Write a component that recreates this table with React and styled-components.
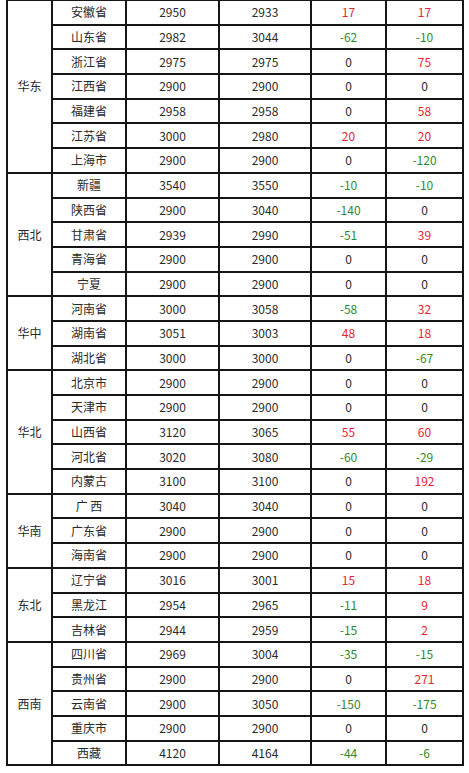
import styled, { createGlobalStyle } from 'styled-components'

const GlobalStyle = createGlobalStyle`
  html, body {
    margin: 0;
    padding: 0;
    background: #FFFFFF;
  }
  body {
    font-family: "Microsoft YaHei", "Noto Sans CJK SC", "Noto Sans", sans-serif;
  }
`

// 지역별 데이터
const regions = [
  {
    name: '华东',
    rows: [
      ['安徽省', 2950, 2933, 17, 17],
      ['山东省', 2982, 3044, -62, -10],
      ['浙江省', 2975, 2975, 0, 75],
      ['江西省', 2900, 2900, 0, 0],
      ['福建省', 2958, 2958, 0, 58],
      ['江苏省', 3000, 2980, 20, 20],
      ['上海市', 2900, 2900, 0, -120],
    ],
  },
  {
    name: '西北',
    rows: [
      ['新疆', 3540, 3550, -10, -10],
      ['陕西省', 2900, 3040, -140, 0],
      ['甘肃省', 2939, 2990, -51, 39],
      ['青海省', 2900, 2900, 0, 0],
      ['宁夏', 2900, 2900, 0, 0],
    ],
  },
  {
    name: '华中',
    rows: [
      ['河南省', 3000, 3058, -58, 32],
      ['湖南省', 3051, 3003, 48, 18],
      ['湖北省', 3000, 3000, 0, -67],
    ],
  },
  {
    name: '华北',
    rows: [
      ['北京市', 2900, 2900, 0, 0],
      ['天津市', 2900, 2900, 0, 0],
      ['山西省', 3120, 3065, 55, 60],
      ['河北省', 3020, 3080, -60, -29],
      ['内蒙古', 3100, 3100, 0, 192],
    ],
  },
  {
    name: '华南',
    rows: [
      ['广 西', 3040, 3040, 0, 0],
      ['广东省', 2900, 2900, 0, 0],
      ['海南省', 2900, 2900, 0, 0],
    ],
  },
  {
    name: '东北',
    rows: [
      ['辽宁省', 3016, 3001, 15, 18],
      ['黑龙江', 2954, 2965, -11, 9],
      ['吉林省', 2944, 2959, -15, 2],
    ],
  },
  {
    name: '西南',
    rows: [
      ['四川省', 2969, 3004, -35, -15],
      ['贵州省', 2900, 2900, 0, 271],
      ['云南省', 2900, 3050, -150, -175],
      ['重庆市', 2900, 2900, 0, 0],
      ['西藏', 4120, 4164, -44, -6],
    ],
  },
]

const columnWidths = [45, 74, 93, 92, 75, 77]

const Page = styled.div`
  padding: 0 0 0 6px;
`

const Table = styled.table`
  border-collapse: collapse;
  table-layout: fixed;
  width: 456px;
  margin-top: -1px;
  border: 2px solid #161616;
`

const Col = styled.col`
  width: ${(props) => props.$w}px;
`

const Row = styled.tr`
  height: 24.7px;
`

const Cell = styled.td`
  border: 2px solid #161616;
  padding: 0;
  text-align: center;
  vertical-align: middle;
  font-size: 12px;
  line-height: 14px;
  color: ${(props) =>
    props.$tone === 'up' ? '#e8242f' : props.$tone === 'down' ? '#2f8a2a' : '#2a2a2a'};
`

const toneOf = (v) => (v > 0 ? 'up' : v < 0 ? 'down' : 'flat')

export default function App() {
  return (
    <Page>
      <GlobalStyle />
      <Table>
        <colgroup>
          {columnWidths.map((w, i) => (
            <Col key={i} $w={w} />
          ))}
        </colgroup>
        <tbody>
          {regions.map((region) =>
            region.rows.map((r, i) => (
              <Row key={region.name + r[0]}>
                {i === 0 && <Cell rowSpan={region.rows.length}>{region.name}</Cell>}
                <Cell>{r[0]}</Cell>
                <Cell>{r[1]}</Cell>
                <Cell>{r[2]}</Cell>
                <Cell $tone={toneOf(r[3])}>{r[3]}</Cell>
                <Cell $tone={toneOf(r[4])}>{r[4]}</Cell>
              </Row>
            ))
          )}
        </tbody>
      </Table>
    </Page>
  )
}
